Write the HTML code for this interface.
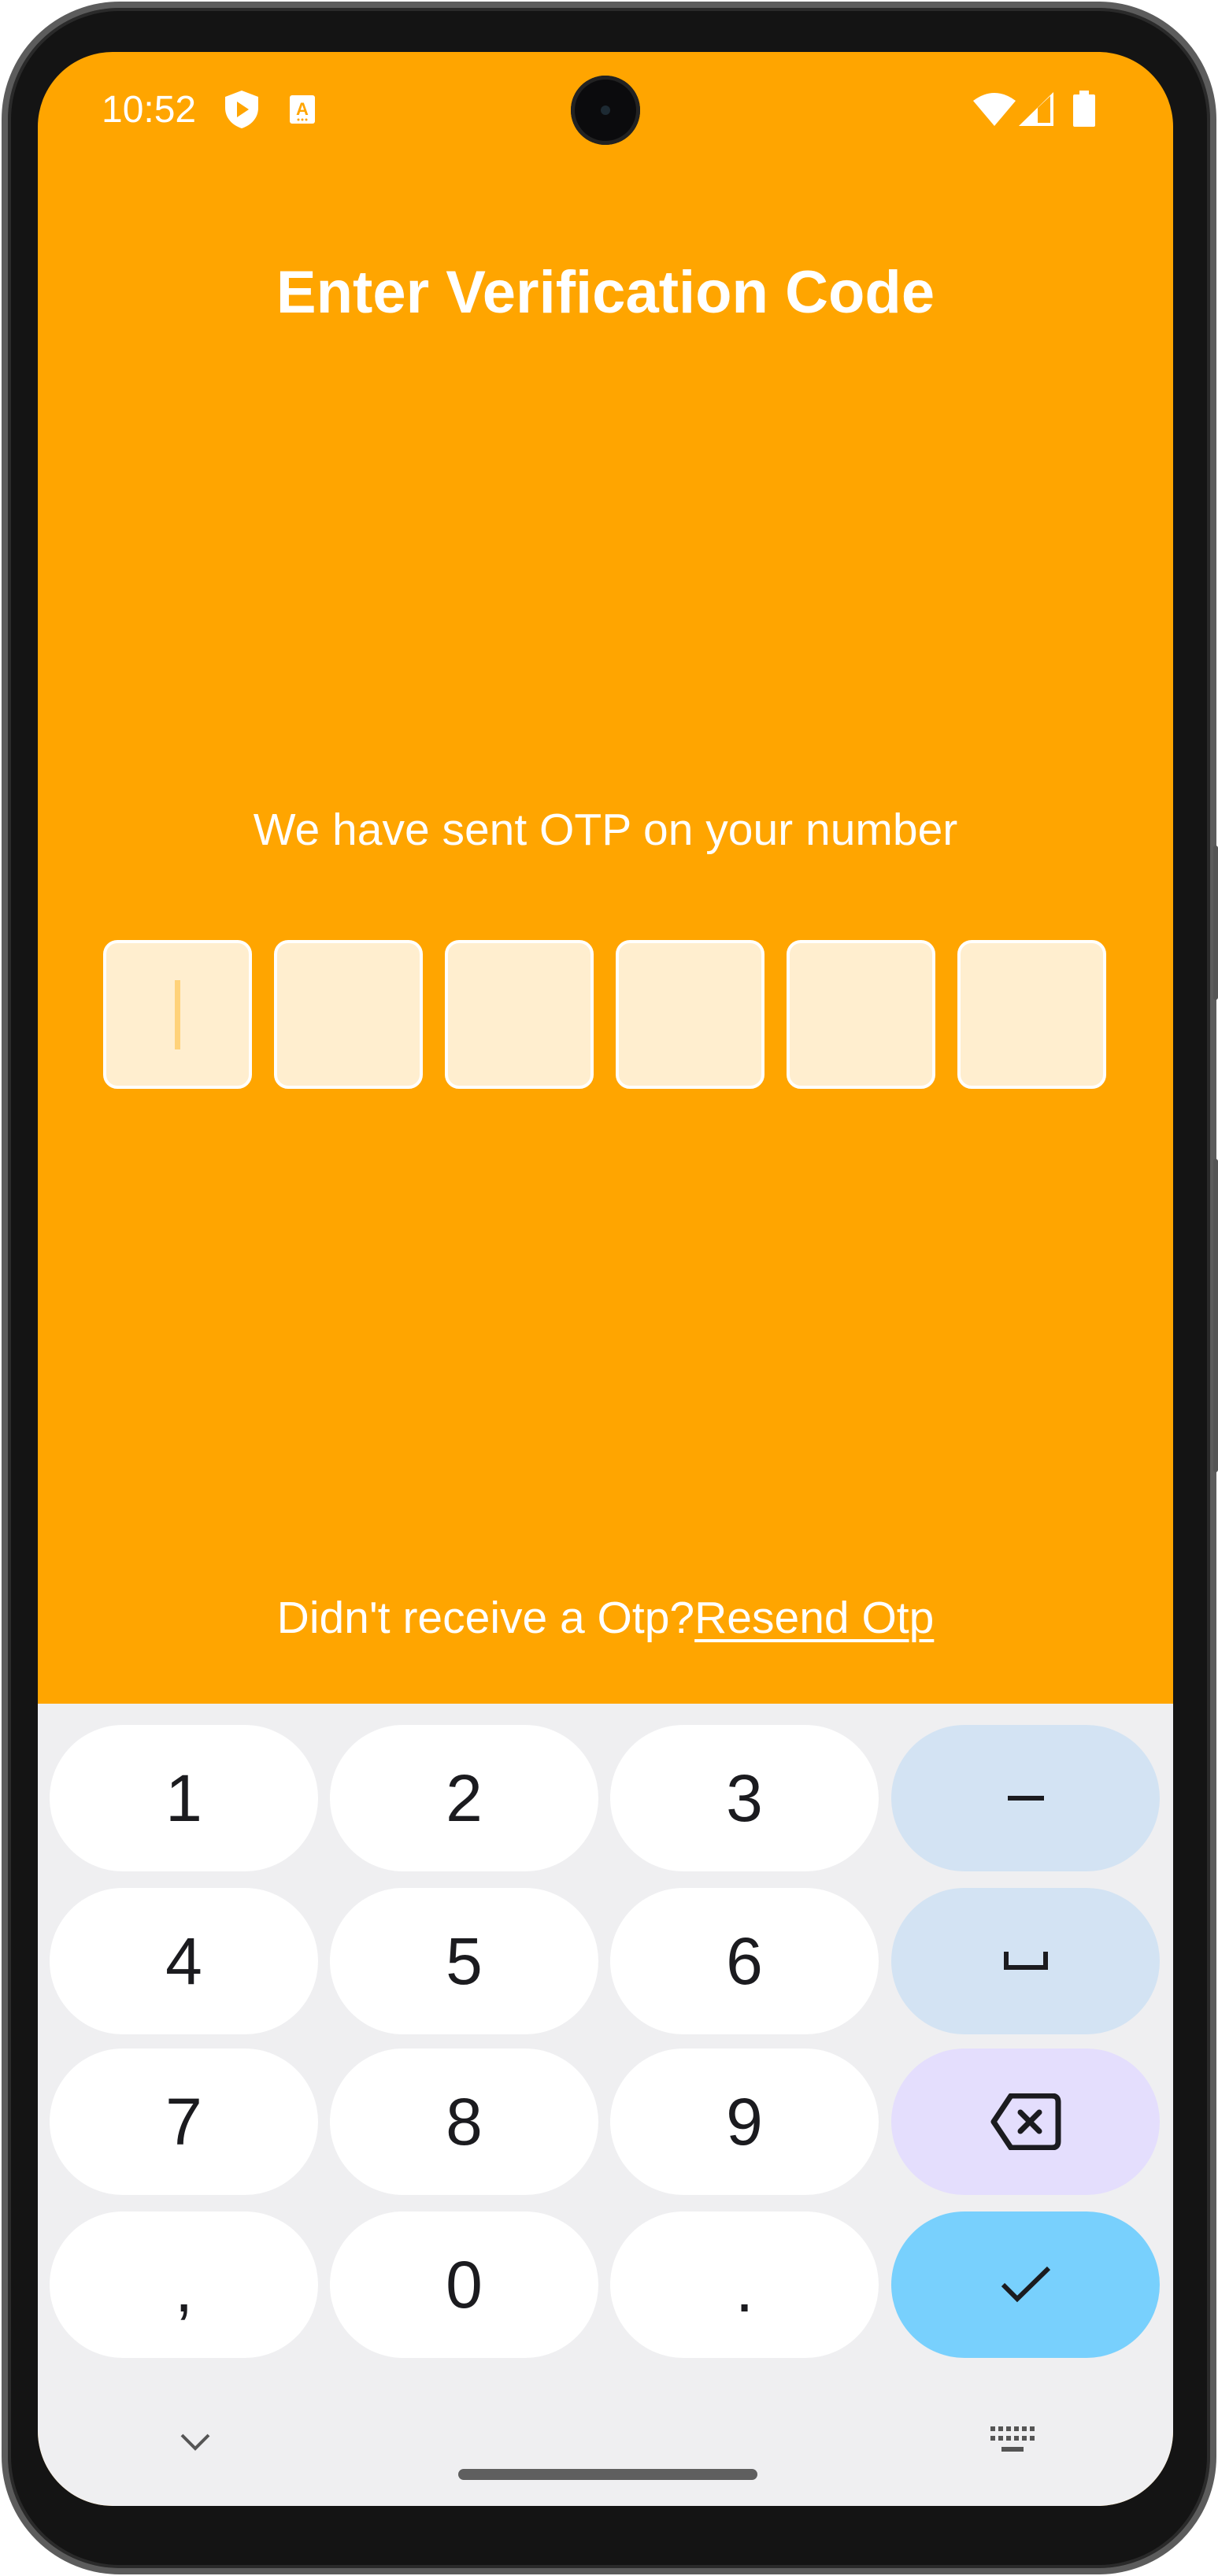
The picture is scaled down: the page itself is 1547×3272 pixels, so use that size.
<!DOCTYPE html>
<html><head><meta charset="utf-8"><style>
*{margin:0;padding:0;box-sizing:border-box}
html,body{width:1547px;height:3272px;background:#fff;overflow:hidden;font-family:"Liberation Sans",Roboto,sans-serif}
.phone{position:absolute;left:2px;top:2px;width:1543px;height:3268px;border-radius:150px;background:#141414;border:8px solid #5c5c5c;box-shadow:inset 0 0 0 4px #2a2a2a}
.btn{position:absolute;right:0;width:6px;background:#555;border-radius:3px}
.screen{position:absolute;left:48px;top:66px;width:1442px;height:3117px;border-radius:95px;overflow:hidden;background:#FFA500}
.abs{position:absolute}
.t{color:#fff;white-space:nowrap}
.box{position:absolute;top:1128px;width:189px;height:189px;border:4px solid #fff;border-radius:18px;background:#FFEECF}
.kb{position:absolute;left:0;top:2098px;width:1442px;height:1019px;background:#EFEFF1}
.key{position:absolute;width:341px;height:186px;border-radius:93px;background:#fff;color:#1b1b1f;font-size:84px;display:flex;align-items:center;justify-content:center}
</style></head><body>
<div class="phone"></div>
<div class="btn" style="top:1074px;height:196px"></div>
<div class="btn" style="top:1472px;height:398px"></div>
<div class="screen">
  <div class="abs t" style="left:81px;top:46px;font-size:48px;line-height:56px">10:52</div>
  <svg class="abs" style="left:238px;top:49px" width="42" height="48" viewBox="0 0 42 48"><path d="M21 0 L42 8 V22 C42 35 33 44 21 48 C9 44 0 35 0 22 V8 Z" fill="#fff"/><path d="M15 14 L30 24 L15 34 Z" fill="#FFA500"/></svg>
  <svg class="abs" style="left:320px;top:55px" width="32" height="36" viewBox="0 0 32 36"><rect width="32" height="36" rx="3" fill="#fff"/><text x="16" y="25" font-size="22" font-weight="bold" text-anchor="middle" fill="#FFA500" font-family="Liberation Sans">A</text><circle cx="11" cy="31" r="1.5" fill="#FFA500"/><circle cx="16" cy="31" r="1.5" fill="#FFA500"/><circle cx="21" cy="31" r="1.5" fill="#FFA500"/></svg>
  <div class="abs" style="left:677px;top:30px;width:88px;height:88px;border-radius:50%;background:#0b0b0d;box-shadow:inset 0 0 0 5px #222"></div>
  <div class="abs" style="left:715px;top:68px;width:12px;height:12px;border-radius:50%;background:#1d2a33"></div>
  <svg class="abs" style="left:1188px;top:50px" width="54" height="44" viewBox="0 0 54 44"><path d="M0 12 Q27 -8 54 12 L27 44 Z" fill="#fff"/></svg>
  <svg class="abs" style="left:1246px;top:51px" width="44" height="43" viewBox="0 0 44 43"><path d="M44 0 V43 H0 Z" fill="#fff"/><path d="M24 20 L40 5 V39 H24 Z" fill="#FFA500"/></svg>
  <svg class="abs" style="left:1315px;top:49px" width="28" height="46" viewBox="0 0 28 46"><rect x="8" y="0" width="12" height="6" fill="#fff"/><rect x="0" y="5" width="28" height="41" rx="2" fill="#fff"/></svg>

  <div class="abs t" style="left:0;width:1442px;text-align:center;top:260px;font-size:76px;font-weight:bold;line-height:92px">Enter Verification Code</div>
  <div class="abs t" style="left:0;width:1442px;text-align:center;top:955px;font-size:57px;line-height:66px">We have sent OTP on your number</div>

  <div class="box" style="left:83px"><div class="abs" style="left:87px;top:47px;width:7px;height:88px;background:#FFD27A"></div></div>
  <div class="box" style="left:300px"></div>
  <div class="box" style="left:517px"></div>
  <div class="box" style="left:734px"></div>
  <div class="box" style="left:951px"></div>
  <div class="box" style="left:1168px"></div>

  <div class="abs t" style="left:0;width:1442px;text-align:center;top:1956px;font-size:57px;line-height:66px">Didn't receive a Otp?<span style="text-decoration:underline;text-decoration-thickness:4px;text-underline-offset:8px">Resend Otp</span></div>

  <div class="kb">
    <div class="key" style="left:15px;top:27px">1</div>
    <div class="key" style="left:371px;top:27px">2</div>
    <div class="key" style="left:727px;top:27px">3</div>
    <div class="key" style="left:1084px;top:27px;background:#D3E3F3"><div style="width:46px;height:6px;background:#1b1b1f"></div></div>
    <div class="key" style="left:15px;top:234px">4</div>
    <div class="key" style="left:371px;top:234px">5</div>
    <div class="key" style="left:727px;top:234px">6</div>
    <div class="key" style="left:1084px;top:234px;background:#D3E3F3"><svg width="56" height="24" viewBox="0 0 56 24"><path d="M3 0 V20 H53 V0" fill="none" stroke="#1b1b1f" stroke-width="6"/></svg></div>
    <div class="key" style="left:15px;top:438px">7</div>
    <div class="key" style="left:371px;top:438px">8</div>
    <div class="key" style="left:727px;top:438px">9</div>
    <div class="key" style="left:1084px;top:438px;background:#E4DEFD"><svg width="90" height="72" viewBox="0 0 90 72"><path d="M26 3 H78 Q86 3 86 11 V61 Q86 69 78 69 H26 L4 36 Z" fill="none" stroke="#1b1b1f" stroke-width="7" stroke-linejoin="round"/><path d="M38 24 L62 48 M62 24 L38 48" stroke="#1b1b1f" stroke-width="7" stroke-linecap="round"/></svg></div>
    <div class="key" style="left:15px;top:645px"><span style="margin-top:10px">,</span></div>
    <div class="key" style="left:371px;top:645px">0</div>
    <div class="key" style="left:727px;top:645px"><span style="margin-top:10px">.</span></div>
    <div class="key" style="left:1084px;top:645px;background:#78D0FD"><svg width="64" height="48" viewBox="0 0 64 48"><path d="M3 24 L21 42 L61 3" fill="none" stroke="#1b1b1f" stroke-width="6"/></svg></div>
    <svg class="abs" style="left:180px;top:926px" width="40" height="24" viewBox="0 0 40 24"><path d="M3 3 L20 20 L37 3" fill="none" stroke="#555" stroke-width="4"/></svg>
    <svg class="abs" style="left:1210px;top:918px" width="56" height="40" viewBox="0 0 56 40"><g fill="#555"><rect x="0" y="0" width="6" height="6"/><rect x="10" y="0" width="6" height="6"/><rect x="20" y="0" width="6" height="6"/><rect x="30" y="0" width="6" height="6"/><rect x="40" y="0" width="6" height="6"/><rect x="50" y="0" width="6" height="6"/><rect x="0" y="12" width="6" height="6"/><rect x="10" y="12" width="6" height="6"/><rect x="20" y="12" width="6" height="6"/><rect x="30" y="12" width="6" height="6"/><rect x="40" y="12" width="6" height="6"/><rect x="50" y="12" width="6" height="6"/><rect x="14" y="26" width="28" height="6"/></g></svg>
    <div class="abs" style="left:534px;top:972px;width:380px;height:14px;border-radius:7px;background:#5f5f5f"></div>
  </div>
</div>
</body></html>
